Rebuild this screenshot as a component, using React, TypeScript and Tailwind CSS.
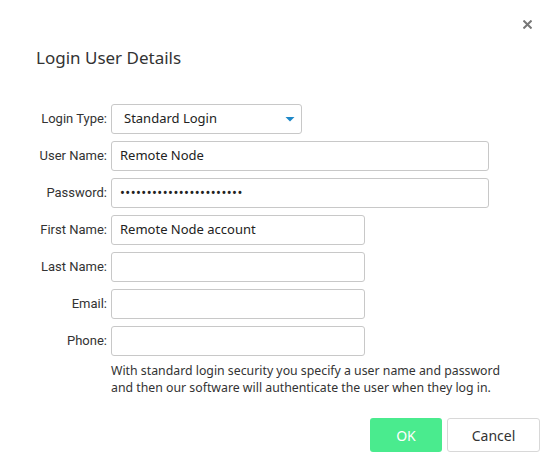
import React from "react";

const Row = ({ label, children }: { label: string; children: React.ReactNode }) => (
  <div className="flex items-center h-[30px]">
    <div className="w-[107px] text-right text-[13px] text-[#333] font-['Roboto',sans-serif]">{label}</div>
    <div className="ml-[4px]">{children}</div>
  </div>
);

const Input = ({ value, w, extra }: { value?: string; w: string; extra?: string }) => (
  <div className={`${w} ${extra ?? ""} h-[30px] border border-[#c8c8c8] rounded-[3px] flex items-center px-[8px] text-[13px] text-[#222]`}>
    {value}
  </div>
);

export default function App() {
  return (
    <div className="w-[551px] h-[467px] bg-white relative font-['Noto_Sans',sans-serif] text-[#222]">
      <svg className="absolute left-[523px] top-[20px]" width="9" height="9" viewBox="0 0 9 9">
        <path d="M1.2 1.2 L7.8 7.8 M7.8 1.2 L1.2 7.8" stroke="#777" strokeWidth="2" strokeLinecap="square" />
      </svg>
      <div className="pt-[46px] pl-[36px] text-[17px] text-[#333] leading-[24px]">Login User Details</div>
      <div className="mt-[34px] flex flex-col gap-[7px]">
        <Row label="Login Type:">
          <div className="w-[191px] h-[30px] border border-[#c8c8c8] rounded-[3px] flex items-center justify-between pl-[12px] pr-[6px] text-[13px] text-[#222]">
            <span>Standard Login</span>
            <svg width="10" height="5" viewBox="0 0 10 5">
              <path d="M0.5 0 H9.5 L5 4.5 Z" fill="#1e88c8" />
            </svg>
          </div>
        </Row>
        <Row label="User Name:"><Input w="w-[378px]" value="Remote Node" /></Row>
        <Row label="Password:">
          <Input w="w-[378px]" extra="tracking-[0.45px]" value="•••••••••••••••••••••••" />
        </Row>
        <Row label="First Name:"><Input w="w-[254px]" value="Remote Node account" /></Row>
        <Row label="Last Name:"><Input w="w-[254px]" /></Row>
        <Row label="Email:"><Input w="w-[254px]" /></Row>
        <Row label="Phone:"><Input w="w-[254px]" /></Row>
      </div>
      <div className="ml-[111px] mt-[6px] text-[12.3px] leading-[17px] text-[#333]">
        With standard login security you specify a user name and password<br />
        and then our software will authenticate the user when they log in.
      </div>
      <div className="absolute left-[370px] top-[418px] flex gap-[5px]">
        <div className="w-[72px] h-[34px] rounded-[3px] bg-[#4aeb8e] text-white text-[14px] flex items-center justify-center">OK</div>
        <div className="w-[93px] h-[34px] rounded-[3px] border border-[#d8d8d8] text-[#333] text-[14px] flex items-center justify-center">Cancel</div>
      </div>
    </div>
  );
}
